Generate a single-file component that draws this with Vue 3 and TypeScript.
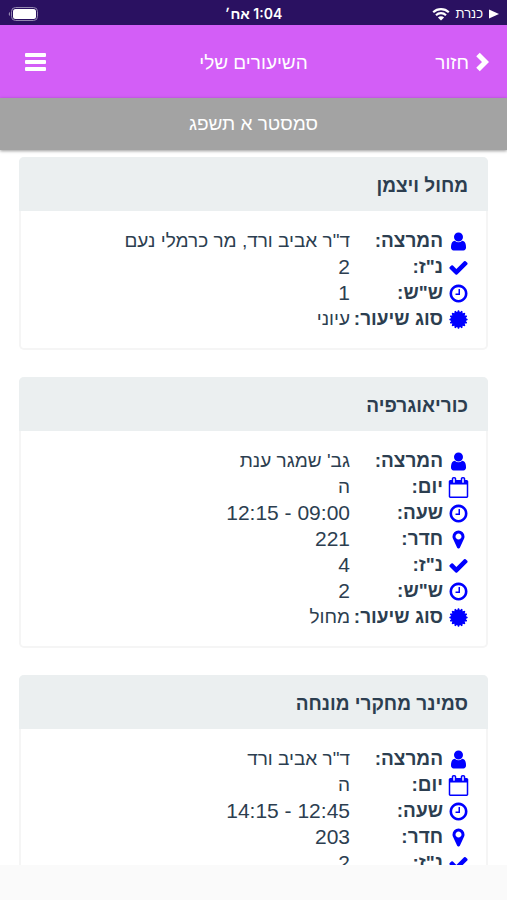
<script setup lang="ts">
type IconName = 'user' | 'calendar' | 'clock' | 'marker' | 'check' | 'badge'

interface Row {
  icon: IconName
  label: string
  value: string
}

interface Lesson {
  title: string
  rows: Row[]
}

// Toothed seal drawn around the centre of the 1792 unit icon grid
function sealPath(teeth: number, outer: number, inner: number): string {
  const points: string[] = []
  const step = Math.PI / teeth
  for (let i = 0; i < teeth; i++) {
    const a = i * 2 * step
    for (const [angle, radius] of [
      [a - step * 0.3, outer],
      [a + step * 0.3, outer],
      [a + step, inner],
    ]) {
      points.push(`${Math.round(896 + radius * Math.sin(angle))} ${Math.round(896 - radius * Math.cos(angle))}`)
    }
  }
  return `M${points.join('L')}z`
}

const icons: Record<IconName, string> = {
  user: 'M1536 1399q0 109-62.5 187t-150.5 78h-854q-88 0-150.5-78t-62.5-187q0-85 8.5-160.5t31.5-152 58.5-131 94-89 134.5-34.5q131 128 313 128t313-128q76 0 134.5 34.5t94 89 58.5 131 31.5 152 8.5 160.5zm-256-887q0 159-112.5 271.5t-271.5 112.5-271.5-112.5-112.5-271.5 112.5-271.5 271.5-112.5 271.5 112.5 112.5 271.5z',
  check: 'M1671 566q0 40-28 68l-724 724-136 136q-28 28-68 28t-68-28l-136-136-362-362q-28-28-28-68t28-68l136-136q28-28 68-28t68 28l294 295 656-657q28-28 68-28t68 28l136 136q28 28 28 68z',
  clock: 'M1024 544v448q0 14-9 23t-23 9h-320q-14 0-23-9t-9-23v-64q0-14 9-23t23-9h224v-352q0-14 9-23t23-9h64q14 0 23 9t9 23zm416 352q0-148-73-273t-198-198-273-73-273 73-198 198-73 273 73 273 198 198 273 73 273-73 198-198 73-273zm224 0q0 209-103 385.5t-279.5 279.5-385.5 103-385.5-103-279.5-279.5-103-385.5 103-385.5 279.5-279.5 385.5-103 385.5 103 279.5 279.5 103 385.5z',
  marker: 'M1152 640q0-106-75-181t-181-75-181 75-75 181 75 181 181 75 181-75 75-181zm256 0q0 109-33 179l-364 774q-16 33-47.5 52t-67.5 19-67.5-19-46.5-52l-365-774q-33-70-33-179 0-212 150-362t362-150 362 150 150 362z',
  calendar: 'M192 1664h1408v-1024h-1408v1024zm384-1216v-288q0-14-9-23t-23-9h-64q-14 0-23 9t-9 23v288q0 14 9 23t23 9h64q14 0 23-9t9-23zm768 0v-288q0-14-9-23t-23-9h-64q-14 0-23 9t-9 23v288q0 14 9 23t23 9h64q14 0 23-9t9-23zm384-64v1280q0 52-38 90t-90 38h-1408q-52 0-90-38t-38-90v-1280q0-52 38-90t90-38h128v-96q0-66 47-113t113-47h64q66 0 113 47t47 113v96h384v-96q0-66 47-113t113-47h64q66 0 113 47t47 113v96h128q52 0 90 38t38 90z',
  badge: sealPath(16, 780, 630),
}

const lessons: Lesson[] = [
  {
    title: 'מחול ויצמן',
    rows: [
      { icon: 'user', label: 'המרצה:', value: 'ד"ר אביב ורד, מר כרמלי נעם' },
      { icon: 'check', label: 'נ"ז:', value: '2' },
      { icon: 'clock', label: 'ש"ש:', value: '1' },
      { icon: 'badge', label: 'סוג שיעור:', value: 'עיוני' },
    ],
  },
  {
    title: 'כוריאוגרפיה',
    rows: [
      { icon: 'user', label: 'המרצה:', value: "גב' שמגר ענת" },
      { icon: 'calendar', label: 'יום:', value: 'ה' },
      { icon: 'clock', label: 'שעה:', value: '09:00 - 12:15' },
      { icon: 'marker', label: 'חדר:', value: '221' },
      { icon: 'check', label: 'נ"ז:', value: '4' },
      { icon: 'clock', label: 'ש"ש:', value: '2' },
      { icon: 'badge', label: 'סוג שיעור:', value: 'מחול' },
    ],
  },
  {
    title: 'סמינר מחקרי מונחה',
    rows: [
      { icon: 'user', label: 'המרצה:', value: 'ד"ר אביב ורד' },
      { icon: 'calendar', label: 'יום:', value: 'ה' },
      { icon: 'clock', label: 'שעה:', value: '12:45 - 14:15' },
      { icon: 'marker', label: 'חדר:', value: '203' },
      { icon: 'check', label: 'נ"ז:', value: '2' },
    ],
  },
]

const isNumeric = (value: string): boolean => /^[\d: -]+$/.test(value)
</script>

<template>
  <div class="app" dir="rtl">
    <div class="status">
      <div class="carrier">
        <svg class="play" viewBox="0 0 10 10"><path d="M0 0.5L10 5L0 9.5z" /></svg>
        <span class="network">כנרת</span>
        <svg class="wifi" viewBox="0 0 18 14">
          <path d="M1.2 5.2a11.2 11.2 0 0 1 15.6 0M4 8.2a7.2 7.2 0 0 1 10 0" />
          <path class="dot" d="M9 13.6L5.9 10.5a4.4 4.4 0 0 1 6.2 0z" />
        </svg>
      </div>
      <time class="time">1:04 אח׳</time>
      <svg class="battery" viewBox="0 0 30 14">
        <rect class="shell" x="3.5" y="0.5" width="26" height="13" rx="4" />
        <rect x="5" y="2" width="23" height="10" rx="2.5" />
        <path class="tip" d="M2 5v4a2.2 2.2 0 0 1 0-4z" />
      </svg>
    </div>

    <header class="header">
      <button class="back" type="button">
        <svg viewBox="0 0 14 20"><path d="M3 2.5L10.5 10L3 17.5" /></svg>
        <span>חזור</span>
      </button>
      <h1>השיעורים שלי</h1>
      <button class="menu" type="button" aria-label="תפריט">
        <svg viewBox="0 0 21 18">
          <rect width="21" height="4" rx="1" />
          <rect y="7" width="21" height="4" rx="1" />
          <rect y="14" width="21" height="4" rx="1" />
        </svg>
      </button>
    </header>
    <div class="semester">סמסטר א תשפג</div>

    <main class="list">
      <article v-for="lesson in lessons" :key="lesson.title" class="card">
        <h2>{{ lesson.title }}</h2>
        <dl>
          <div v-for="row in lesson.rows" :key="row.label" class="row">
            <svg viewBox="0 0 1792 1792" aria-hidden="true"><path :d="icons[row.icon]" /></svg>
            <dt>{{ row.label }}</dt>
            <dd :class="{ numeric: isNumeric(row.value) }">{{ row.value }}</dd>
          </div>
        </dl>
      </article>
    </main>
    <footer class="footer"></footer>
  </div>
</template>

<style>
body {
  margin: 0;
}
</style>

<style scoped>
.app {
  display: flex;
  flex-direction: column;
  height: 100vh;
  background: #fff;
  color: #2c3e50;
  font-family: "Liberation Sans", Arial, sans-serif;
  font-size: 19px;
}

.status {
  display: grid;
  grid-template-columns: 1fr auto 1fr;
  align-items: center;
  height: 25px;
  padding: 2px 8px 0;
  box-sizing: border-box;
  background: #2a1161;
  color: #fff;
}

.carrier {
  display: flex;
  align-items: center;
  gap: 6px;
  font-size: 13px;
}

.play {
  width: 10px;
  height: 10px;
  fill: #fff;
}

.wifi {
  width: 18px;
  height: 14px;
  fill: none;
  stroke: #fff;
  stroke-width: 2.2;
}

.wifi .dot {
  fill: #fff;
  stroke: none;
}

.time {
  font-family: Inter, "Liberation Sans", sans-serif;
  font-size: 14px;
  font-weight: 600;
}

.battery {
  justify-self: end;
  width: 30px;
  height: 14px;
  fill: #fff;
}

.battery .shell {
  fill: none;
  stroke: #9488b0;
}

.battery .tip {
  fill: #9488b0;
}

.header {
  display: grid;
  grid-template-columns: 1fr auto 1fr;
  align-items: center;
  height: 73px;
  padding: 0 18px;
  background: #d35ef7;
  color: #fff;
  line-height: 26px;
}

button {
  padding: 0;
  border: 0;
  background: none;
  color: inherit;
  font: inherit;
}

h1 {
  margin: 0;
  padding-top: 2px;
  font-size: 19px;
  font-weight: 400;
}

.back {
  display: flex;
  align-items: center;
  justify-self: start;
  gap: 6px;
}

.back span {
  padding-top: 2px;
}

.back svg {
  width: 14px;
  height: 20px;
  fill: none;
  stroke: #fff;
  stroke-width: 5;
}

.menu {
  display: flex;
  justify-self: end;
  padding: 0 7px;
}

.menu svg {
  width: 21px;
  height: 18px;
  fill: #fff;
}

.semester {
  z-index: 1;
  height: 52px;
  background: #a3a3a3;
  box-shadow: 0 1px 3px rgba(0, 0, 0, 0.4);
  color: #fff;
  line-height: 52px;
  text-align: center;
}

.list {
  display: flex;
  flex: 1;
  flex-direction: column;
  gap: 27px;
  min-height: 0;
  padding: 7px 19px 0;
  overflow: hidden;
}

.card {
  flex: none;
  border-radius: 5px;
  box-shadow: inset 0 0 0 2px #f5f5f5;
  overflow: hidden;
}

h2 {
  margin: 0;
  padding: 4px 20px 0;
  background: #ebeff0;
  font-size: 19px;
  font-weight: 700;
  line-height: 50px;
}

dl {
  margin: 0;
  padding: 17px 19px 18px;
}

.row {
  display: grid;
  grid-template-columns: 21px 88px 1fr;
  align-items: center;
  column-gap: 5px;
  line-height: 26px;
}

.row svg {
  width: 21px;
  height: 21px;
  fill: #0000ff;
}

dt {
  font-weight: 700;
  white-space: nowrap;
}

dd {
  margin: 0;
}

.numeric {
  font-size: 21px;
}

.footer {
  height: 35px;
  background: #fafafa;
}
</style>
